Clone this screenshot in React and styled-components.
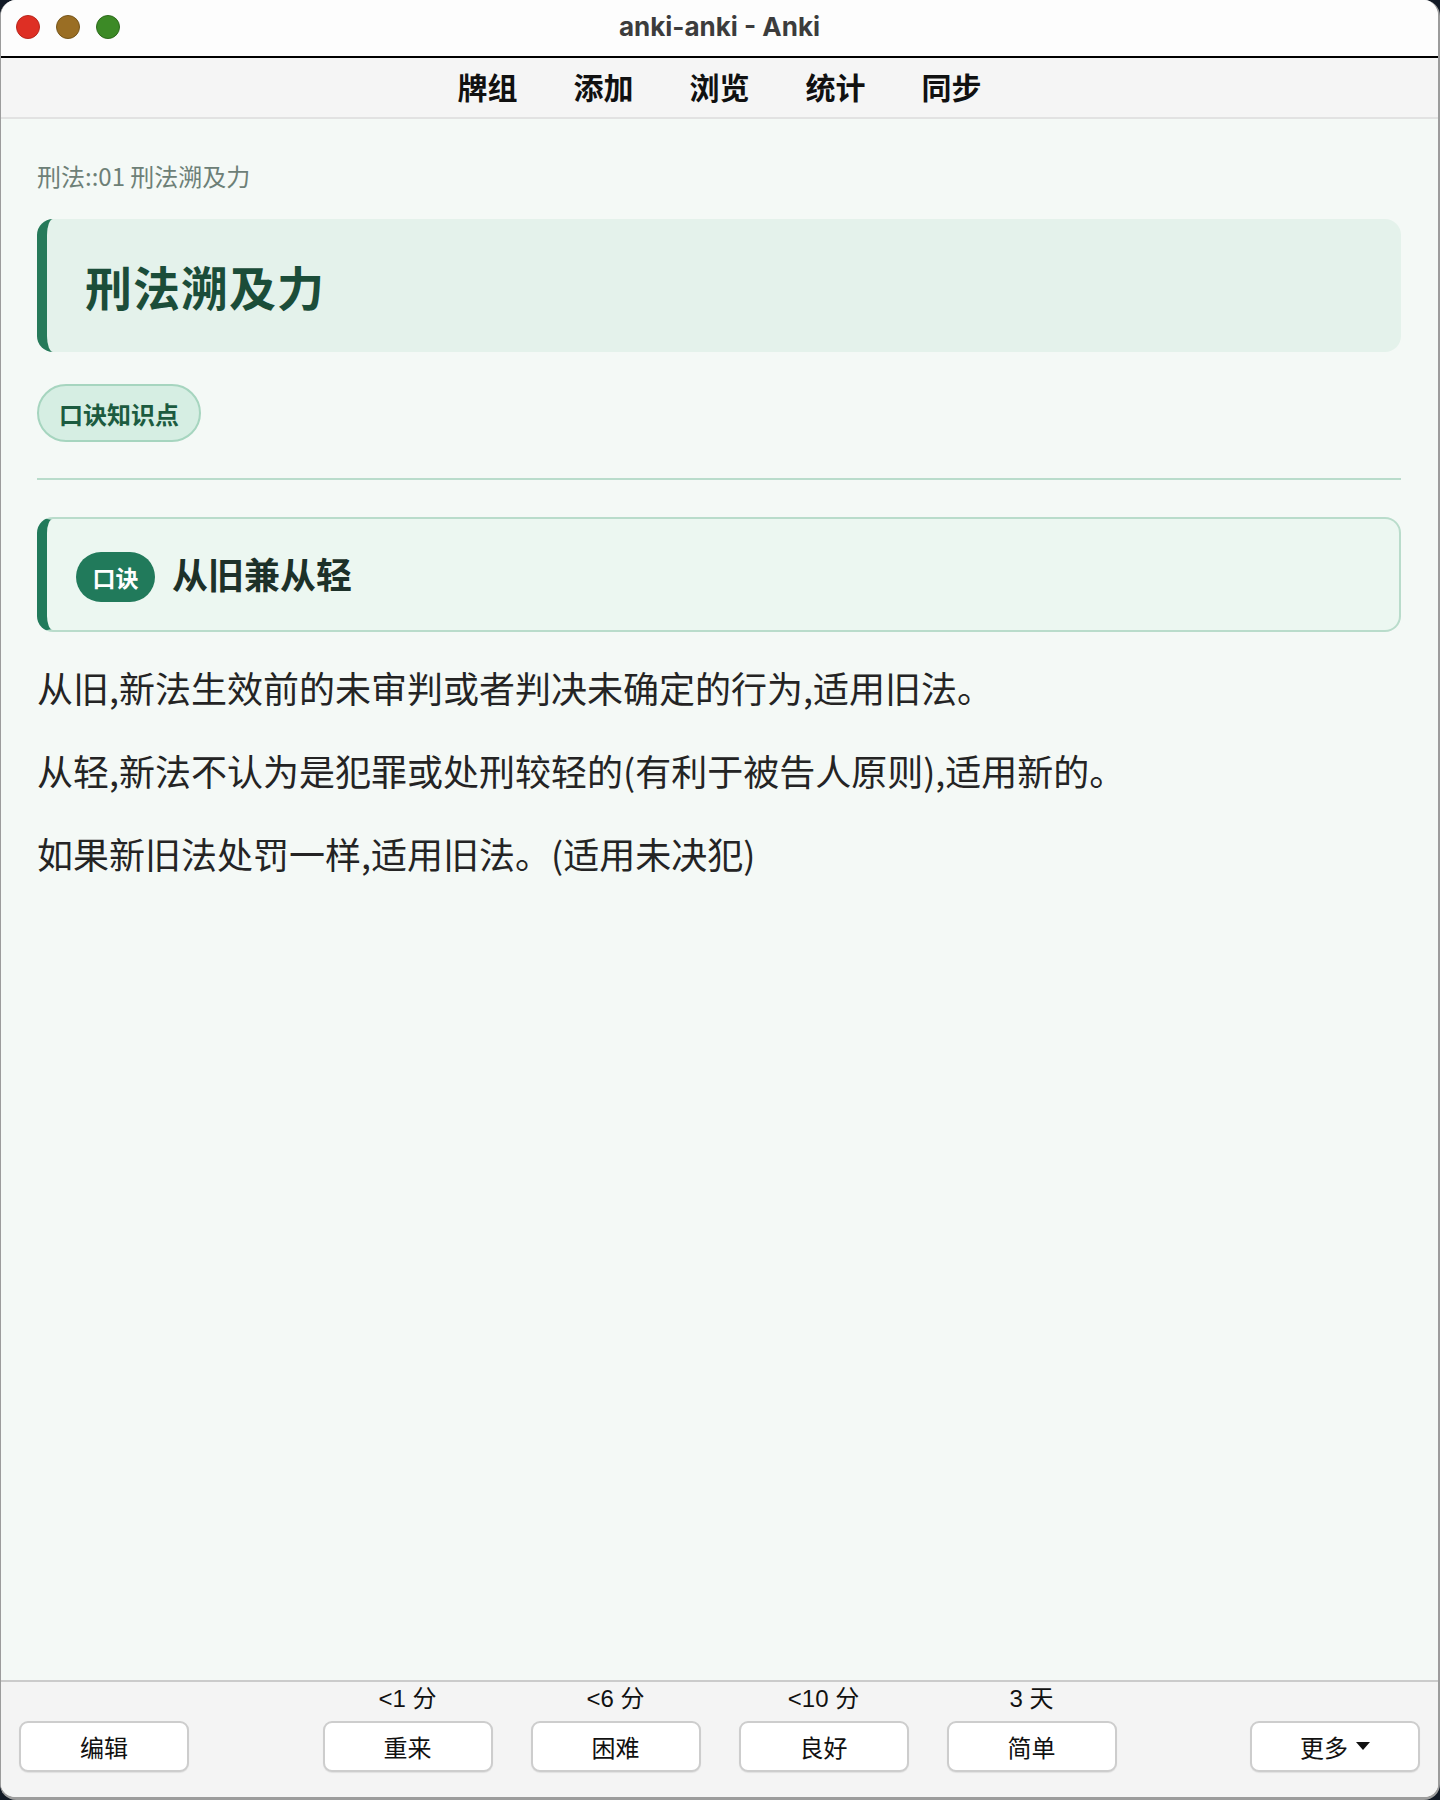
import React from 'react'
import styled, { createGlobalStyle } from 'styled-components'

const GlobalStyle = createGlobalStyle`
  html, body {
    margin: 0;
    padding: 0;
    background: #121a26;
  }
  * {
    box-sizing: border-box;
  }
`

const cjk = `"Noto Sans CJK SC", "Noto Sans", sans-serif`
const latin = `"Liberation Sans", "Noto Sans CJK SC", sans-serif`

const intervals = [
  { label: '<1 分', text: '重来' },
  { label: '<6 分', text: '困难' },
  { label: '<10 分', text: '良好' },
  { label: '3 天', text: '简单' },
]

const navItems = ['牌组', '添加', '浏览', '统计', '同步']

const paragraphs = [
  '从旧,新法生效前的未审判或者判决未确定的行为,适用旧法。',
  '从轻,新法不认为是犯罪或处刑较轻的(有利于被告人原则),适用新的。',
  '如果新旧法处罚一样,适用旧法。(适用未决犯)',
]

export default class App extends React.Component {
  render() {
    return (
      <>
        <GlobalStyle />
        <Window>
          <TitleBar>
            <Lights>
              <Light $fill="#de2f24" $edge="#b8271d" />
              <Light $fill="#9a6e24" $edge="#76561b" />
              <Light $fill="#3c8a26" $edge="#2d6a1c" />
            </Lights>
            <WindowTitle>anki-anki - Anki</WindowTitle>
          </TitleBar>

          <NavBar>
            {navItems.map(item => (
              <NavItem key={item}>{item}</NavItem>
            ))}
          </NavBar>

          <Content>
            <Breadcrumb>刑法::01 刑法溯及力</Breadcrumb>
            <TitleCard>
              <CardTitle>刑法溯及力</CardTitle>
            </TitleCard>
            <Tag>口诀知识点</Tag>
            <Divider />
            <MnemonicCard>
              <Badge>口诀</Badge>
              <MnemonicText>从旧兼从轻</MnemonicText>
            </MnemonicCard>
            {paragraphs.map(p => (
              <Paragraph key={p}>{p}</Paragraph>
            ))}
          </Content>

          <BottomBar>
            <Column>
              <Button>编辑</Button>
            </Column>
            <AnswerGroup>
              {intervals.map(item => (
                <Column key={item.text}>
                  <Interval>{item.label}</Interval>
                  <Button>{item.text}</Button>
                </Column>
              ))}
            </AnswerGroup>
            <Column>
              <Button>
                更多
                <svg width="14" height="9" viewBox="0 0 14 9">
                  <path d="M0 0 H14 L7 8 Z" fill="#111" />
                </svg>
              </Button>
            </Column>
          </BottomBar>
        </Window>
      </>
    )
  }
}

const Window = styled.div`
  width: 1440px;
  height: 1800px;
  display: flex;
  flex-direction: column;
  border-radius: 16px;
  overflow: hidden;
  background: #fdfdfd;
  border-left: 1px solid #9c9c9c;
  border-right: 2px solid #9c9c9c;
  border-bottom: 3px solid #9c9c9c;
`

const TitleBar = styled.div`
  height: 58px;
  flex-shrink: 0;
  position: relative;
  display: flex;
  align-items: center;
  justify-content: center;
  background: #fdfdfd;
  border-bottom: 2px solid #000;
`

const Lights = styled.div`
  position: absolute;
  left: 15px;
  top: 15px;
  display: flex;
  gap: 16px;
`

const Light = styled.span`
  width: 24px;
  height: 24px;
  border-radius: 50%;
  background: ${p => p.$fill};
  border: 1px solid ${p => p.$edge};
`

const WindowTitle = styled.div`
  font-family: "Inter", "Liberation Sans", sans-serif;
  font-size: 26px;
  font-weight: 700;
  color: #3c3c3c;
  margin-top: -3px;
`

const NavBar = styled.div`
  height: 61px;
  flex-shrink: 0;
  display: flex;
  align-items: center;
  justify-content: center;
  gap: 56px;
  padding-bottom: 4px;
  background: #f5f5f5;
  border-bottom: 2px solid #e2e2e2;
`

const NavItem = styled.span`
  font-family: ${cjk};
  font-size: 30px;
  font-weight: 700;
  color: #111;
`

const Content = styled.div`
  flex: 1;
  padding: 41px 37px 0 36px;
  background: #f4f9f6;
`

const Breadcrumb = styled.div`
  font-family: ${cjk};
  font-size: 24px;
  line-height: 32px;
  color: #6d8077;
`

const TitleCard = styled.div`
  margin-top: 27px;
  height: 133px;
  display: flex;
  align-items: center;
  padding-left: 38px;
  background: #e4f2eb;
  border-left: 10px solid #267a5a;
  border-radius: 16px;
`

const CardTitle = styled.h1`
  margin: 0;
  font-family: ${cjk};
  font-size: 47px;
  font-weight: 700;
  color: #1b4d39;
  letter-spacing: 1px;
`

const Tag = styled.div`
  display: inline-flex;
  align-items: center;
  margin-top: 32px;
  height: 58px;
  padding: 0 20px;
  font-family: ${cjk};
  font-size: 24px;
  font-weight: 700;
  color: #1c5b40;
  background: #d6eee3;
  border: 2px solid #a6d5bf;
  border-radius: 29px;
`

const Divider = styled.div`
  margin-top: 36px;
  height: 2px;
  background: #b9dccb;
`

const MnemonicCard = styled.div`
  margin-top: 37px;
  height: 115px;
  display: flex;
  align-items: center;
  gap: 17px;
  padding: 4px 0 0 29px;
  background: #ecf7f1;
  border: 2px solid #b9dccb;
  border-left: 10px solid #217a5b;
  border-radius: 16px;
`

const Badge = styled.span`
  width: 79px;
  height: 50px;
  display: flex;
  align-items: center;
  justify-content: center;
  font-family: ${cjk};
  font-size: 23px;
  font-weight: 700;
  color: #fff;
  background: #217a5b;
  border-radius: 25px;
`

const MnemonicText = styled.span`
  font-family: ${cjk};
  font-size: 36px;
  font-weight: 700;
  color: #1d3129;
  margin-top: -8px;
`

const Paragraph = styled.p`
  margin: 0 0 29px;
  font-family: ${cjk};
  font-size: 36px;
  line-height: 54px;
  color: #242424;

  &:first-of-type {
    margin-top: 28px;
  }
`

const BottomBar = styled.div`
  height: 117px;
  flex-shrink: 0;
  display: flex;
  justify-content: space-between;
  align-items: flex-end;
  padding: 0 18px 25px 18px;
  background: #f4f4f4;
  border-top: 2px solid #cbcbcb;
`

const AnswerGroup = styled.div`
  display: flex;
  gap: 38px;
`

const Column = styled.div`
  display: flex;
  flex-direction: column;
  align-items: center;
  gap: 8px;
`

const Interval = styled.span`
  font-family: ${latin};
  font-size: 24px;
  line-height: 28px;
  color: #111;
`

const Button = styled.button`
  width: 170px;
  height: 51px;
  display: flex;
  align-items: center;
  justify-content: center;
  gap: 8px;
  font-family: ${latin};
  font-size: 24px;
  color: #111;
  background: #fff;
  border: 2px solid #cdcdcd;
  border-radius: 9px;
  box-shadow: 0 1px 1px rgba(0, 0, 0, 0.08);
`
